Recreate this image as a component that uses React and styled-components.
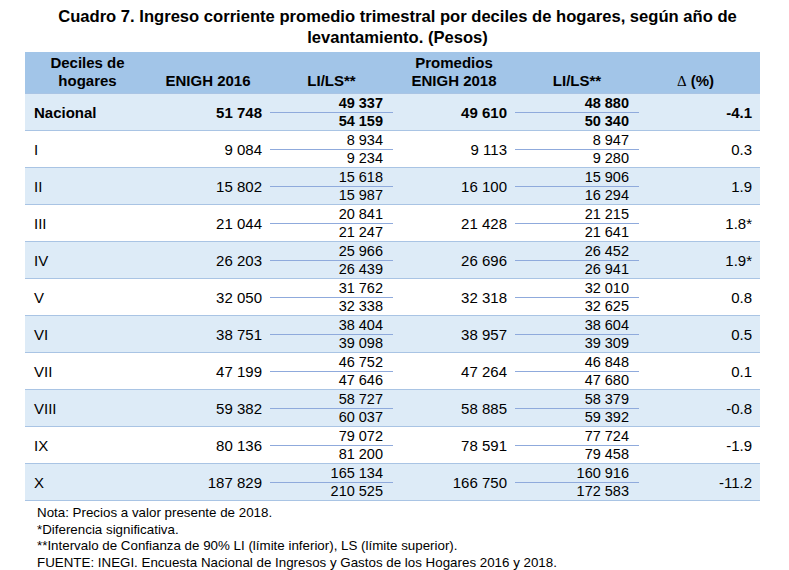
import styled, { createGlobalStyle } from "styled-components";

const GlobalStyle = createGlobalStyle`
  html, body {
    margin: 0;
    padding: 0;
    background: #fff;
  }
  body {
    font-family: "Liberation Sans", Arial, sans-serif;
    color: #000;
  }
`;

const rows = [
  { label: "Nacional", a: "51 748", aLo: "49 337", aHi: "54 159", b: "49 610", bLo: "48 880", bHi: "50 340", d: "-4.1", strong: true },
  { label: "I", a: "9 084", aLo: "8 934", aHi: "9 234", b: "9 113", bLo: "8 947", bHi: "9 280", d: "0.3" },
  { label: "II", a: "15 802", aLo: "15 618", aHi: "15 987", b: "16 100", bLo: "15 906", bHi: "16 294", d: "1.9" },
  { label: "III", a: "21 044", aLo: "20 841", aHi: "21 247", b: "21 428", bLo: "21 215", bHi: "21 641", d: "1.8*" },
  { label: "IV", a: "26 203", aLo: "25 966", aHi: "26 439", b: "26 696", bLo: "26 452", bHi: "26 941", d: "1.9*" },
  { label: "V", a: "32 050", aLo: "31 762", aHi: "32 338", b: "32 318", bLo: "32 010", bHi: "32 625", d: "0.8" },
  { label: "VI", a: "38 751", aLo: "38 404", aHi: "39 098", b: "38 957", bLo: "38 604", bHi: "39 309", d: "0.5" },
  { label: "VII", a: "47 199", aLo: "46 752", aHi: "47 646", b: "47 264", bLo: "46 848", bHi: "47 680", d: "0.1" },
  { label: "VIII", a: "59 382", aLo: "58 727", aHi: "60 037", b: "58 885", bLo: "58 379", bHi: "59 392", d: "-0.8" },
  { label: "IX", a: "80 136", aLo: "79 072", aHi: "81 200", b: "78 591", bLo: "77 724", bHi: "79 458", d: "-1.9" },
  { label: "X", a: "187 829", aLo: "165 134", aHi: "210 525", b: "166 750", bLo: "160 916", bHi: "172 583", d: "-11.2" },
];

const cols = "125px 116px 131px 114px 132px 117px";

const Page = styled.div`
  width: 789px;
  padding-top: 6px;
`;

const Title = styled.h1`
  margin: 0 0 4px;
  font-size: 16.6px;
  line-height: 21px;
  font-weight: bold;
  text-align: center;
  padding-left: 6px;
`;

const Table = styled.div`
  margin-left: 25px;
  width: 735px;
  font-size: 15px;
`;

const Header = styled.div`
  display: grid;
  grid-template-columns: ${cols};
  background: #a2c5e8;
  height: 41px;
  font-weight: bold;
  border-bottom: 1px solid #a9c4e4;
`;

const HeadCell = styled.div`
  display: flex;
  flex-direction: column;
  justify-content: flex-end;
  align-items: center;
  line-height: 18px;
  padding-bottom: 3px;
  padding-right: ${(p) => p.$pr || 0}px;
`;

const Delta = styled.span`
  font-weight: normal;
  font-family: "Liberation Serif", "Times New Roman", serif;
`;

const Row = styled.div`
  display: grid;
  grid-template-columns: ${cols};
  height: 36px;
  border-bottom: 1px solid #a9c4e4;
  background: ${(p) => (p.$shaded ? "#ddebf7" : "#fff")};
  font-weight: ${(p) => (p.$strong ? "bold" : "normal")};
`;

const Label = styled.div`
  display: flex;
  align-items: center;
  padding-left: 9px;
  padding-top: 1px;
`;

const Value = styled.div`
  display: flex;
  align-items: center;
  justify-content: flex-end;
  padding-right: ${(p) => p.$pr}px;
  padding-top: 1px;
`;

const Range = styled.div`
  display: flex;
  flex-direction: column;
  justify-content: center;
  margin: 0 4px;
`;

const RangeValue = styled.div`
  text-align: right;
  padding-right: 10px;
  line-height: 17px;
  font-size: 14.5px;
`;

const Rule = styled.div`
  height: 1px;
  background: #8faadc;
`;

const Notes = styled.div`
  margin: 4px 0 0 37px;
  font-size: 13.35px;
  line-height: 16.7px;
`;

const RangeCell = ({ lo, hi }) => (
  <Range>
    <RangeValue>{lo}</RangeValue>
    <Rule />
    <RangeValue>{hi}</RangeValue>
  </Range>
);

export default function App() {
  return (
    <Page>
      <GlobalStyle />
      <Title>
        Cuadro 7. Ingreso corriente promedio trimestral por deciles de hogares, según año de
        <br />
        levantamiento. (Pesos)
      </Title>
      <Table>
        <Header>
          <HeadCell>
            <span>Deciles de</span>
            <span>hogares</span>
          </HeadCell>
          <HeadCell>ENIGH 2016</HeadCell>
          <HeadCell>LI/LS**</HeadCell>
          <HeadCell>
            <span>Promedios</span>
            <span>ENIGH 2018</span>
          </HeadCell>
          <HeadCell>LI/LS**</HeadCell>
          <HeadCell $pr={12}>
            <span>
              <Delta>Δ</Delta> (%)
            </span>
          </HeadCell>
        </Header>
        {rows.map((r, i) => (
          <Row key={r.label} $shaded={i % 2 === 0} $strong={r.strong}>
            <Label>{r.label}</Label>
            <Value $pr={4}>{r.a}</Value>
            <RangeCell lo={r.aLo} hi={r.aHi} />
            <Value $pr={4}>{r.b}</Value>
            <RangeCell lo={r.bLo} hi={r.bHi} />
            <Value $pr={8}>{r.d}</Value>
          </Row>
        ))}
      </Table>
      <Notes>
        <div>Nota: Precios a valor presente de 2018.</div>
        <div>*Diferencia significativa.</div>
        <div>**Intervalo de Confianza de 90% LI (límite inferior), LS (límite superior).</div>
        <div>FUENTE: INEGI. Encuesta Nacional de Ingresos y Gastos de los Hogares 2016 y 2018.</div>
      </Notes>
    </Page>
  );
}
